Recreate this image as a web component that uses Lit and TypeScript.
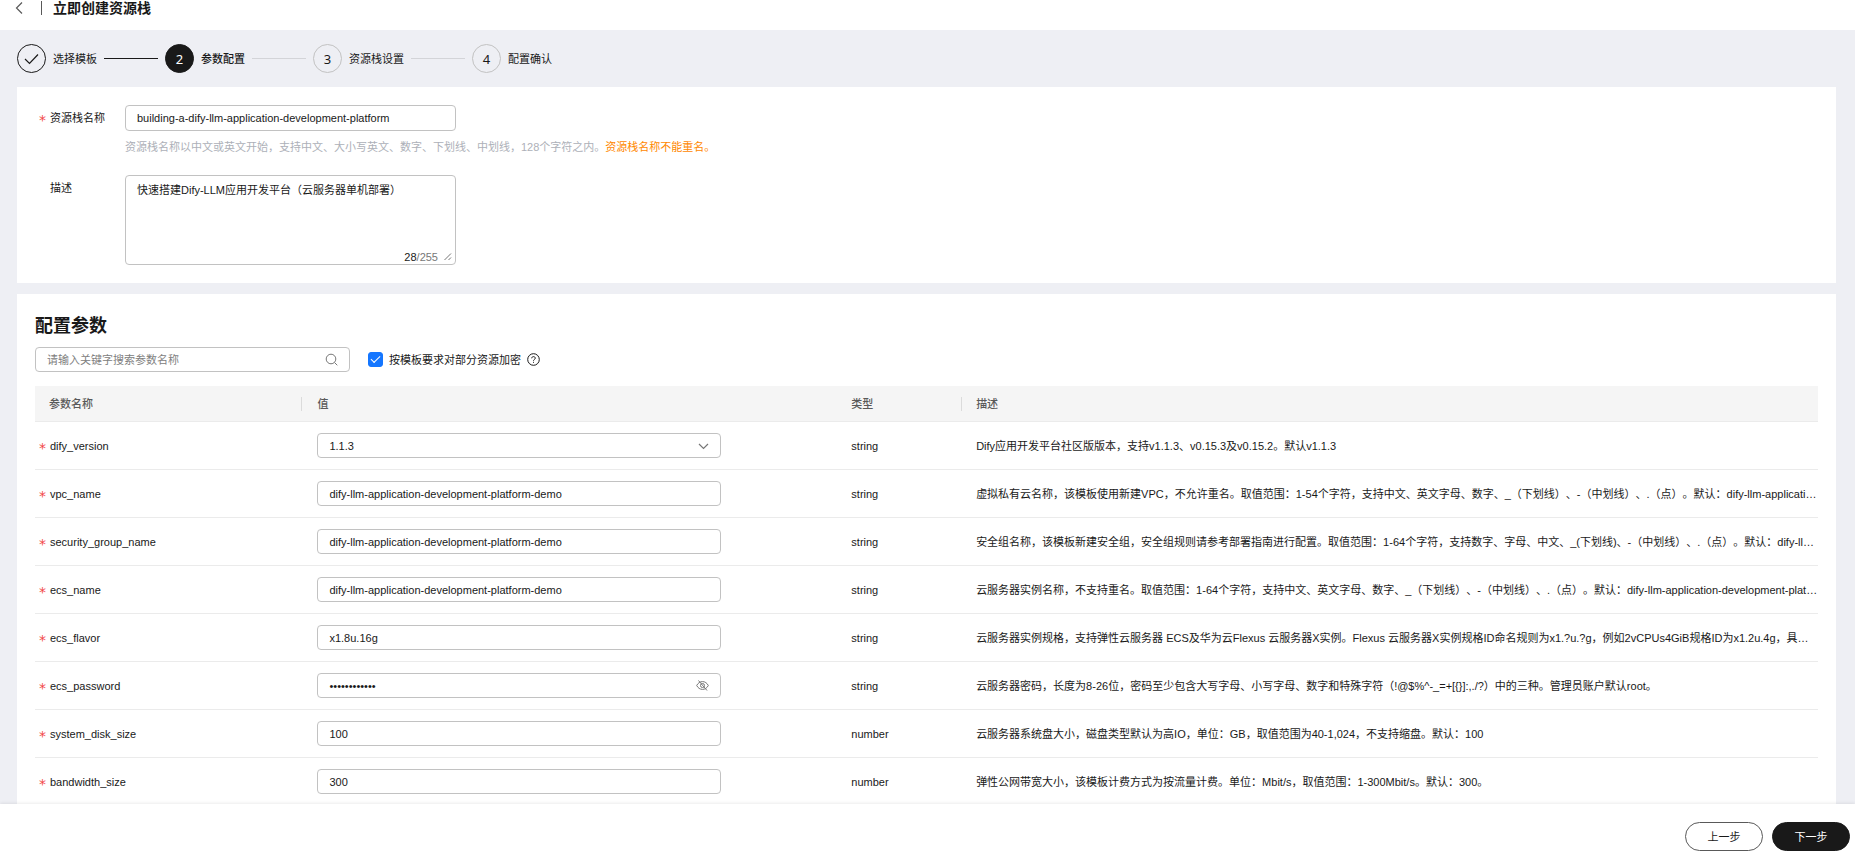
import { LitElement, html, css, svg } from "lit";
import { customElement, state } from "lit/decorators.js";
import { classMap } from "lit/directives/class-map.js";

type Kind = "select" | "text" | "password";

interface Param {
  name: string;
  kind: Kind;
  value: string;
  type: string;
  desc: string;
}

const PARAMS: Param[] = [
  { name: "dify_version", kind: "select", value: "1.1.3", type: "string", desc: "Dify应用开发平台社区版版本，支持v1.1.3、v0.15.3及v0.15.2。默认v1.1.3" },
  { name: "vpc_name", kind: "text", value: "dify-llm-application-development-platform-demo", type: "string", desc: "虚拟私有云名称，该模板使用新建VPC，不允许重名。取值范围：1-54个字符，支持中文、英文字母、数字、_（下划线）、-（中划线）、.（点）。默认：dify-llm-application-development-platform-demo" },
  { name: "security_group_name", kind: "text", value: "dify-llm-application-development-platform-demo", type: "string", desc: "安全组名称，该模板新建安全组，安全组规则请参考部署指南进行配置。取值范围：1-64个字符，支持数字、字母、中文、_(下划线)、-（中划线）、.（点）。默认：dify-llm-application-development-platform-demo" },
  { name: "ecs_name", kind: "text", value: "dify-llm-application-development-platform-demo", type: "string", desc: "云服务器实例名称，不支持重名。取值范围：1-64个字符，支持中文、英文字母、数字、_（下划线）、-（中划线）、.（点）。默认：dify-llm-application-development-platform-demo" },
  { name: "ecs_flavor", kind: "text", value: "x1.8u.16g", type: "string", desc: "云服务器实例规格，支持弹性云服务器 ECS及华为云Flexus 云服务器X实例。Flexus 云服务器X实例规格ID命名规则为x1.?u.?g，例如2vCPUs4GiB规格ID为x1.2u.4g，具体请参考部署指南。" },
  { name: "ecs_password", kind: "password", value: "Passw0rd@123", type: "string", desc: "云服务器密码，长度为8-26位，密码至少包含大写字母、小写字母、数字和特殊字符（!@$%^-_=+[{}]:,./?）中的三种。管理员账户默认root。" },
  { name: "system_disk_size", kind: "text", value: "100", type: "number", desc: "云服务器系统盘大小，磁盘类型默认为高IO，单位：GB，取值范围为40-1,024，不支持缩盘。默认：100" },
  { name: "bandwidth_size", kind: "text", value: "300", type: "number", desc: "弹性公网带宽大小，该模板计费方式为按流量计费。单位：Mbit/s，取值范围：1-300Mbit/s。默认：300。" },
];

const STEPS = ["选择模板", "参数配置", "资源栈设置", "配置确认"];

const icon = (cls: string, w: number, h: number, body: unknown) => html`
  <svg class=${cls} width=${w} height=${h} viewBox="0 0 ${w} ${h}" fill="none" stroke="currentColor" aria-hidden="true">${body}</svg>
`;

@customElement("app-root")
export class AppRoot extends LitElement {
  @state() private current = 1;
  @state() private showPassword = false;

  static styles = css`
    :host {
      display: flex;
      flex-direction: column;
      height: 100vh;
      background: #eeeff4;
      color: #191919;
      font: 11px/16px "Liberation Sans", "Noto Sans CJK SC", sans-serif;
      text-spacing-trim: space-all;
    }
    * { box-sizing: border-box; }
    input, select, textarea, button { font: inherit; color: inherit; margin: 0; }
    svg { display: block; flex: none; }
    .scroll { flex: 1; min-height: 0; overflow-y: auto; scrollbar-width: none; }
    .head { display: flex; align-items: center; gap: 11px; padding: 0 16px 14px 15px; background: #fff; }
    .back { border: 0; padding: 0; background: none; color: #595959; }
    .divider { width: 1px; height: 14px; margin-left: 7px; background: #595959; }
    .title { margin: 0; font-size: 14px; line-height: 16px; font-weight: 700; }
    .content { padding: 14px 19px 0 17px; }
    .steps { display: flex; list-style: none; margin: 0 0 14px; padding: 0; }
    .step { display: flex; align-items: center; gap: 7px; margin-right: 7px; }
    .dot {
      width: 29px; height: 29px; border: 1px solid #c2c2c2; border-radius: 50%;
      display: flex; align-items: center; justify-content: center;
      font-family: "Noto Sans", sans-serif; font-size: 13px;
    }
    .dot.done { border-color: #191919; }
    .dot.now { border-color: #191919; background: #191919; color: #fff; }
    .name.now { font-weight: 500; }
    .line { width: 54px; height: 1px; background: #d3d4d8; }
    .line.done { background: #191919; }
    .card { background: #fff; margin-bottom: 11px; }
    .basic { display: grid; grid-template-columns: 86px 1fr; padding: 18px 22px; }
    .label { display: flex; line-height: 26px; }
    .star { width: 11px; margin: 2px 0 -2px; color: #f24848; font-family: "DejaVu Sans", sans-serif; font-size: 14px; flex: none; }
    .field {
      display: block; height: 25px; padding: 0 11px; border: 1px solid #c2c2c2;
      border-radius: 4px; background: #fff; outline: 0;
    }
    .field:focus, .area:focus { border-color: #191919; }
    .narrow { width: 331px; height: 26px; }
    .hint { margin: 8px 0 20px; color: #adb0b8; }
    .warn { color: #ff8800; }
    .box { position: relative; width: 331px; height: 90px; }
    .area {
      display: block; width: 100%; height: 100%; padding: 6px 11px; border: 1px solid #c2c2c2;
      border-radius: 4px; resize: none; outline: 0; background: #fff;
    }
    .count { position: absolute; right: 4px; bottom: 0; display: flex; align-items: center; gap: 6px; color: #777; }
    .count b { font-weight: 400; color: #191919; }
    .params { padding: 20px 18px 20px; }
    .subtitle { margin: 0; font-size: 18px; line-height: 24px; font-weight: 700; }
    .tools { display: flex; align-items: center; gap: 18px; margin: 9px 0 14px; }
    .wrap { position: relative; }
    .search { width: 315px; }
    .search .field { width: 100%; padding-right: 30px; }
    .search .field::placeholder { color: #808080; opacity: 1; }
    .affix { position: absolute; right: 12px; top: 0; height: 100%; display: flex; align-items: center; color: #777; }
    button.affix { border: 0; padding: 0; background: none; }
    .caret { pointer-events: none; }
    .check { display: flex; align-items: center; gap: 6px; }
    .tick {
      appearance: none; width: 15px; height: 15px; border-radius: 3px; border: 1px solid #c2c2c2;
      display: grid; place-items: center;
    }
    .tick:checked { background: #1476ff; border-color: #1476ff; }
    .tick:checked::before {
      content: ""; width: 8px; height: 4px; border: solid #fff; border-width: 0 0 1px 1px;
      transform: rotate(-45deg) translate(1px, -1px);
    }
    .table { width: 100%; border-collapse: separate; border-spacing: 0; table-layout: fixed; }
    .c1 { width: 15%; } .c2 { width: 30%; } .c3 { width: 7%; }
    th {
      height: 36px; padding: 0 0 0 14px; text-align: left; font-weight: 500; color: #595959;
      background: #f5f5f5; border-bottom: 1px solid #ebebeb;
    }
    .th { display: flex; align-items: center; }
    .bar .th::after { content: ""; width: 1px; height: 14px; margin-left: auto; background: #dbdbdb; }
    td {
      height: 48px; padding: 0 0 0 14px; border-bottom: 1px solid #ebebeb;
      white-space: nowrap; overflow: hidden; text-overflow: ellipsis;
    }
    .key { padding-left: 4px; }
    .key .label { line-height: 16px; }
    .c2, .wide { padding-left: 15px; padding-right: 15px; }
    .value { width: 80%; }
    .value .field { width: 100%; }
    select.field { appearance: none; }
    .foot {
      display: flex; justify-content: flex-end; gap: 9px; padding: 18px 5px 7px;
      background: #fff; box-shadow: 0 -1px 3px rgba(0, 0, 0, 0.08); z-index: 1;
    }
    .btn { width: 78px; height: 29px; border: 1px solid #595959; border-radius: 15px; background: #fff; padding: 0; }
    .btn.primary { background: #191919; border-color: #191919; color: #fff; }
  `;

  private control(p: Param) {
    if (p.kind === "select") {
      return html`
        <select class="field" id=${p.name}><option>1.1.3</option><option>0.15.3</option><option>0.15.2</option></select>
        <span class="affix caret">${icon("", 12, 12, svg`<path d="M2 4 6.500 8.500 11 4" stroke-width="1.200" />`)}</span>`;
    }
    if (p.kind === "password") {
      return html`
        <input class="field" id=${p.name} type=${this.showPassword ? "text" : "password"} .value=${p.value} />
        <button class="affix" aria-label="显示密码" @click=${() => (this.showPassword = !this.showPassword)}>
          ${icon("", 13, 11, svg`<path d="M.7 5.500C2 3 4 1.600 6.500 1.600S11 3 12.300 5.500C11 8 9 9.400 6.500 9.400S2 8 .7 5.500Z" /><circle cx="6.500" cy="5.500" r="2" /><path d="m2.500.5 8.500 10" />`)}
        </button>`;
    }
    return html`<input class="field" id=${p.name} type="text" .value=${p.value} />`;
  }

  private row(p: Param) {
    return html`
      <tr>
        <td class="key"><label class="label" for=${p.name}><span class="star">*</span>${p.name}</label></td>
        <td class="wide"><div class="wrap value">${this.control(p)}</div></td>
        <td>${p.type}</td>
        <td>${p.desc}</td>
      </tr>`;
  }

  private step(name: string, i: number) {
    const s = { done: i < this.current, now: i === this.current };
    return html`
      <li class="step">
        <span class=${classMap({ dot: true, ...s })}>
          ${s.done ? icon("", 15, 12, svg`<path d="m1 6 4.500 4.500L14 1.500" stroke-width="1.200" />`) : i + 1}
        </span>
        <span class=${classMap({ name: true, ...s })}>${name}</span>
        ${i < STEPS.length - 1 ? html`<span class=${classMap({ line: true, ...s })}></span>` : ""}
      </li>`;
  }

  render() {
    return html`
      <div class="scroll">
        <header class="head">
          <button class="back" aria-label="返回">${icon("", 8, 14, svg`<path d="M7 1.500 1.500 7 7 12.500" stroke-width="1.200" />`)}</button>
          <span class="divider"></span>
          <h1 class="title">立即创建资源栈</h1>
        </header>
        <main class="content">
          <ol class="steps">${STEPS.map((n, i) => this.step(n, i))}</ol>
          <section class="card basic">
            <label class="label" for="stack"><span class="star">*</span>资源栈名称</label>
            <div>
              <input class="field narrow" id="stack" type="text" value="building-a-dify-llm-application-development-platform" />
              <p class="hint">资源栈名称以中文或英文开始，支持中文、大小写英文、数字、下划线、中划线，128个字符之内。<span class="warn">资源栈名称不能重名。</span></p>
            </div>
            <label class="label" for="desc"><span class="star"></span>描述</label>
            <div class="box">
              <textarea class="area" id="desc" .value=${"快速搭建Dify-LLM应用开发平台（云服务器单机部署）"}></textarea>
              <span class="count"><span><b>28</b>/255</span>${icon("", 8, 8, svg`<path d="M.5 7 7 .5M4.500 7 7 4.500" />`)}</span>
            </div>
          </section>
          <section class="card params">
            <h2 class="subtitle">配置参数</h2>
            <div class="tools">
              <div class="wrap search">
                <input class="field" type="text" aria-label="搜索参数" placeholder="请输入关键字搜索参数名称" />
                <span class="affix">${icon("", 13, 13, svg`<circle cx="6" cy="6" r="4.800" /><path d="m9.500 9.500 2.800 2.800" />`)}</span>
              </div>
              <label class="check">
                <input class="tick" type="checkbox" checked />按模板要求对部分资源加密
                ${icon("", 13, 13, svg`<circle cx="6.500" cy="6.500" r="5.800" /><path d="M4.700 5.300c0-1 .8-1.700 1.800-1.700s1.800.7 1.800 1.600c0 1.200-1.800 1.300-1.800 2.500M6.500 8.800v1" />`)}
              </label>
            </div>
            <table class="table">
              <thead>
                <tr>
                  <th class="c1 bar"><div class="th">参数名称</div></th>
                  <th class="c2"><div class="th">值</div></th>
                  <th class="c3 bar"><div class="th">类型</div></th>
                  <th><div class="th">描述</div></th>
                </tr>
              </thead>
              <tbody>${PARAMS.map((p) => this.row(p))}</tbody>
            </table>
          </section>
        </main>
      </div>
      <footer class="foot">
        <button class="btn">上一步</button>
        <button class="btn primary">下一步</button>
      </footer>
    `;
  }
}
